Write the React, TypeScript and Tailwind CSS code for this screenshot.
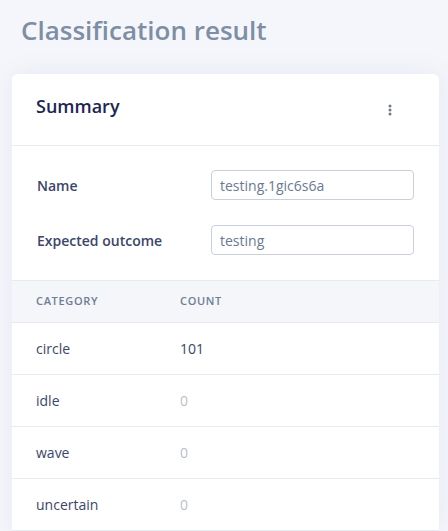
import React from "react";

const rows = [
  { category: "circle", count: 101 },
  { category: "idle", count: 0 },
  { category: "wave", count: 0 },
  { category: "uncertain", count: 0 },
];

function Kebab() {
  return (
    <svg width="4" height="12" viewBox="0 0 4 12" className="text-[#6d7b92]">
      <circle cx="2" cy="2" r="1.5" fill="currentColor" />
      <circle cx="2" cy="6" r="1.5" fill="currentColor" />
      <circle cx="2" cy="10" r="1.5" fill="currentColor" />
    </svg>
  );
}

export default function App() {
  return (
    <div
      className="min-h-[531px] w-[448px] overflow-hidden bg-[#f5f6fb]"
      style={{ fontFamily: '"Open Sans", "Noto Sans", sans-serif' }}
    >
      <h1 className="px-[21px] pt-[12px] text-[26px] font-semibold leading-[36px] text-[#7d8ea5]">
        Classification result
      </h1>

      <div className="ml-[12px] mr-[9px] mt-[26px] rounded-t-[6px] bg-white shadow-[0_0_24px_rgba(110,120,170,0.10)]">
        <div className="flex h-[72px] items-center justify-between border-b border-[#e7eaf0] pl-[24px] pr-[45px]">
          <h2 className="-mt-[7px] text-[18px] font-semibold text-[#1d2553]">Summary</h2>
          <button className="mt-[1px] flex h-[16px] w-[8px] items-center justify-center">
            <Kebab />
          </button>
        </div>

        <div className="flex flex-col gap-[25px] border-b border-[#e7eaf0] pb-[25px] pl-[24px] pr-[25px] pt-[24px]">
          <div className="flex items-center">
            <label className="w-[175px] pl-[1px] text-[14px] font-semibold text-[#3b4669]">Name</label>
            <input
              readOnly
              value="testing.1gic6s6a"
              className="h-[30px] w-[203px] rounded-[4px] border border-[#c9d0db] px-[8px] text-[14px] text-[#6a7a93] outline-none"
            />
          </div>
          <div className="flex items-center">
            <label className="w-[175px] pl-[1px] text-[14px] font-semibold text-[#3b4669]">Expected outcome</label>
            <input
              readOnly
              value="testing"
              className="h-[30px] w-[203px] rounded-[4px] border border-[#c9d0db] px-[8px] text-[14px] text-[#6a7a93] outline-none"
            />
          </div>
        </div>

        <table className="w-full border-collapse">
          <thead>
            <tr className="h-[41px] border-b border-[#e7eaf0] bg-[#f4f6f9]">
              <th className="w-[168px] pl-[24px] text-left text-[11px] font-semibold tracking-[0.06em] text-[#6f7d94]">
                CATEGORY
              </th>
              <th className="text-left text-[11px] font-semibold tracking-[0.06em] text-[#6f7d94]">COUNT</th>
            </tr>
          </thead>
          <tbody>
            {rows.map((r) => (
              <tr key={r.category} className="h-[52px] border-b border-[#e7eaf0]">
                <td className="pl-[24px] text-[14px] text-[#3b4669]">{r.category}</td>
                <td className={r.count ? "text-[14px] text-[#3b4669]" : "text-[14px] text-[#b8bfca]"}>
                  {r.count}
                </td>
              </tr>
            ))}
          </tbody>
        </table>
      </div>
    </div>
  );
}
